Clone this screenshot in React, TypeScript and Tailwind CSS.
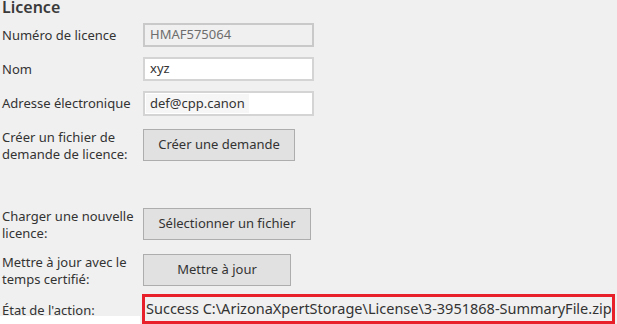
const font = { fontFamily: '"Noto Sans", "Open Sans", sans-serif' };

function Label({ children }: { children: React.ReactNode }) {
  return <div className="w-[143px] shrink-0 pl-[2px] text-[13px] leading-[17px] text-[#333]">{children}</div>;
}

function Field({ value, disabled }: { value: string; disabled?: boolean }) {
  return (
    <div
      className={
        disabled
          ? 'flex h-[24px] w-[171px] items-center border-2 border-[#c9c9c9] bg-[#f0f0f0] pl-[5px] text-[13px] text-[#6d6d6d]'
          : 'flex h-[24px] w-[171px] items-center border-2 border-[#d4d4d4] bg-white pl-[5px] text-[13px] text-[#333]'
      }
    >
      {value}
    </div>
  );
}

function Btn({ children, w }: { children: React.ReactNode; w: string }) {
  return (
    <button className={`${w} flex h-[32px] items-center justify-center border border-[#adadad] bg-[#e1e1e1] text-[13px] text-[#333]`}>
      {children}
    </button>
  );
}

export default function App() {
  return (
    <div className="h-[324px] w-[617px] overflow-hidden bg-[#f0f0f0]" style={font}>
      <h2 className="mt-[-4px] pl-[2px] text-[16px] font-semibold leading-[22px] text-[#3a3a3a]">Licence</h2>

      <div className="mt-[5px] flex items-center">
        <Label>Numéro de licence</Label>
        <Field value="HMAF575064" disabled />
      </div>
      <div className="mt-[10px] flex items-center">
        <Label>Nom</Label>
        <Field value="xyz" />
      </div>
      <div className="mt-[10px] flex items-center">
        <Label>Adresse électronique</Label>
        <div className="flex h-[25px] w-[171px] items-center border-2 border-[#d4d4d4] bg-white pl-[1px] text-[13px] text-[#333]">
          <span className="bg-[#f6f6f6] px-[4px]">def@cpp.canon</span>
        </div>
      </div>

      <div className="mt-[13px] flex h-[32px] items-start">
        <Label>
          <div>Créer un fichier de</div>
          <div>demande de licence:</div>
        </Label>
        <Btn w="w-[152px]">Créer une demande</Btn>
      </div>

      <div className="mt-[47px] flex h-[32px] items-start">
        <Label>
          <div>Charger une nouvelle</div>
          <div>licence:</div>
        </Label>
        <Btn w="w-[168px]">Sélectionner un fichier</Btn>
      </div>

      <div className="mt-[14px] flex h-[32px] items-start">
        <Label>
          <div>Mettre à jour avec le</div>
          <div>temps certifié:</div>
        </Label>
        <Btn w="w-[148px]">Mettre à jour</Btn>
      </div>

      <div className="mt-[8px] flex h-[30px] items-start">
        <div className="flex h-[30px] w-[140px] shrink-0 flex-col">
          <div className="flex h-[22px] items-end bg-[#f0f0f0] pl-[2px]">
            <span className="-mb-[3px] text-[13px] leading-[17px] text-[#333]">État de l'action:</span>
          </div>
          <div className="flex-1 bg-white" />
        </div>
        <div className="ml-[2px] flex h-[30px] w-[473px] items-center overflow-hidden whitespace-nowrap border-[3px] border-[#e8202a] bg-[#f0f0f0] pl-[1px] text-[14.5px] text-[#333]">
          Success C:\ArizonaXpertStorage\License\3-3951868-SummaryFile.zip
        </div>
      </div>
    </div>
  );
}
